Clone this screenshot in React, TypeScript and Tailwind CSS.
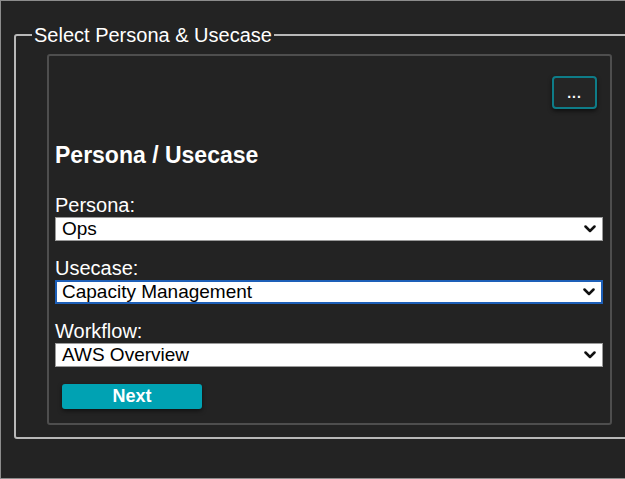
const FONT = { fontFamily: '"Liberation Sans", Arial, sans-serif' };

function Chevron() {
  return (
    <svg width="12" height="8" viewBox="0 0 12 8" className="absolute right-[6px] top-1/2 -translate-y-1/2">
      <path d="M1.5 1.5 L6 6 L10.5 1.5" fill="none" stroke="#111" strokeWidth="2.5" strokeLinecap="round" strokeLinejoin="round" />
    </svg>
  );
}

function SelectField({ label, value, focused }: { label: string; value: string; focused?: boolean }) {
  return (
    <div className="mr-[7px]">
      <div className="text-[20px] leading-[23px] text-white">{label}</div>
      <div
        className={
          focused
            ? 'relative h-[24px] border-2 border-[#1d5fb8] bg-white pl-[5px] text-[19px] leading-[20px] text-black'
            : 'relative h-[24px] border border-[#9a9a9a] bg-white pl-[6px] text-[19px] leading-[22px] text-black'
        }
      >
        {value}
        <Chevron />
      </div>
    </div>
  );
}

export default function App() {
  return (
    <div
      className="h-[479px] w-[625px] overflow-hidden border-y border-l border-[#8c8c8c] bg-[#232323]"
      style={FONT}
    >
      <fieldset className="ml-[13px] mt-[22px] w-[640px] rounded-[3px] border-2 border-[#b8b8b8] pb-[12px]">
        <legend className="ml-[16px] px-[2px] text-[20px] leading-[24px] text-white">
          Select Persona &amp; Usecase
        </legend>

        <div className="ml-[31px] mt-[7px] h-[371px] w-[565px] rounded-[3px] border-2 border-[#4e4e4e] pl-[6px]">
          <div className="flex justify-end pr-[13px] pt-[20px]">
            <button className="flex h-[33px] w-[45px] items-center justify-center rounded-[4px] border-2 border-[#0e7c88] bg-[#252525] shadow-[0_2px_4px_rgba(0,0,0,0.6)]">
              <span className="text-[14px] font-bold leading-none tracking-[1px] text-white">...</span>
            </button>
          </div>

          <h2 className="mt-[33px] text-[23px] font-bold leading-[27px] text-white">Persona / Usecase</h2>

          <div className="mt-[25px] flex flex-col gap-[16px]">
            <SelectField label="Persona:" value="Ops" />
            <SelectField label="Usecase:" value="Capacity Management" focused />
            <SelectField label="Workflow:" value="AWS Overview" />
          </div>

          <button className="ml-[7px] mt-[17px] h-[25px] w-[140px] rounded-[3px] bg-[#00a2b3] text-[18px] font-bold leading-[25px] text-white shadow-[0_2px_4px_rgba(0,0,0,0.5)]">
            Next
          </button>
        </div>
      </fieldset>
    </div>
  );
}
